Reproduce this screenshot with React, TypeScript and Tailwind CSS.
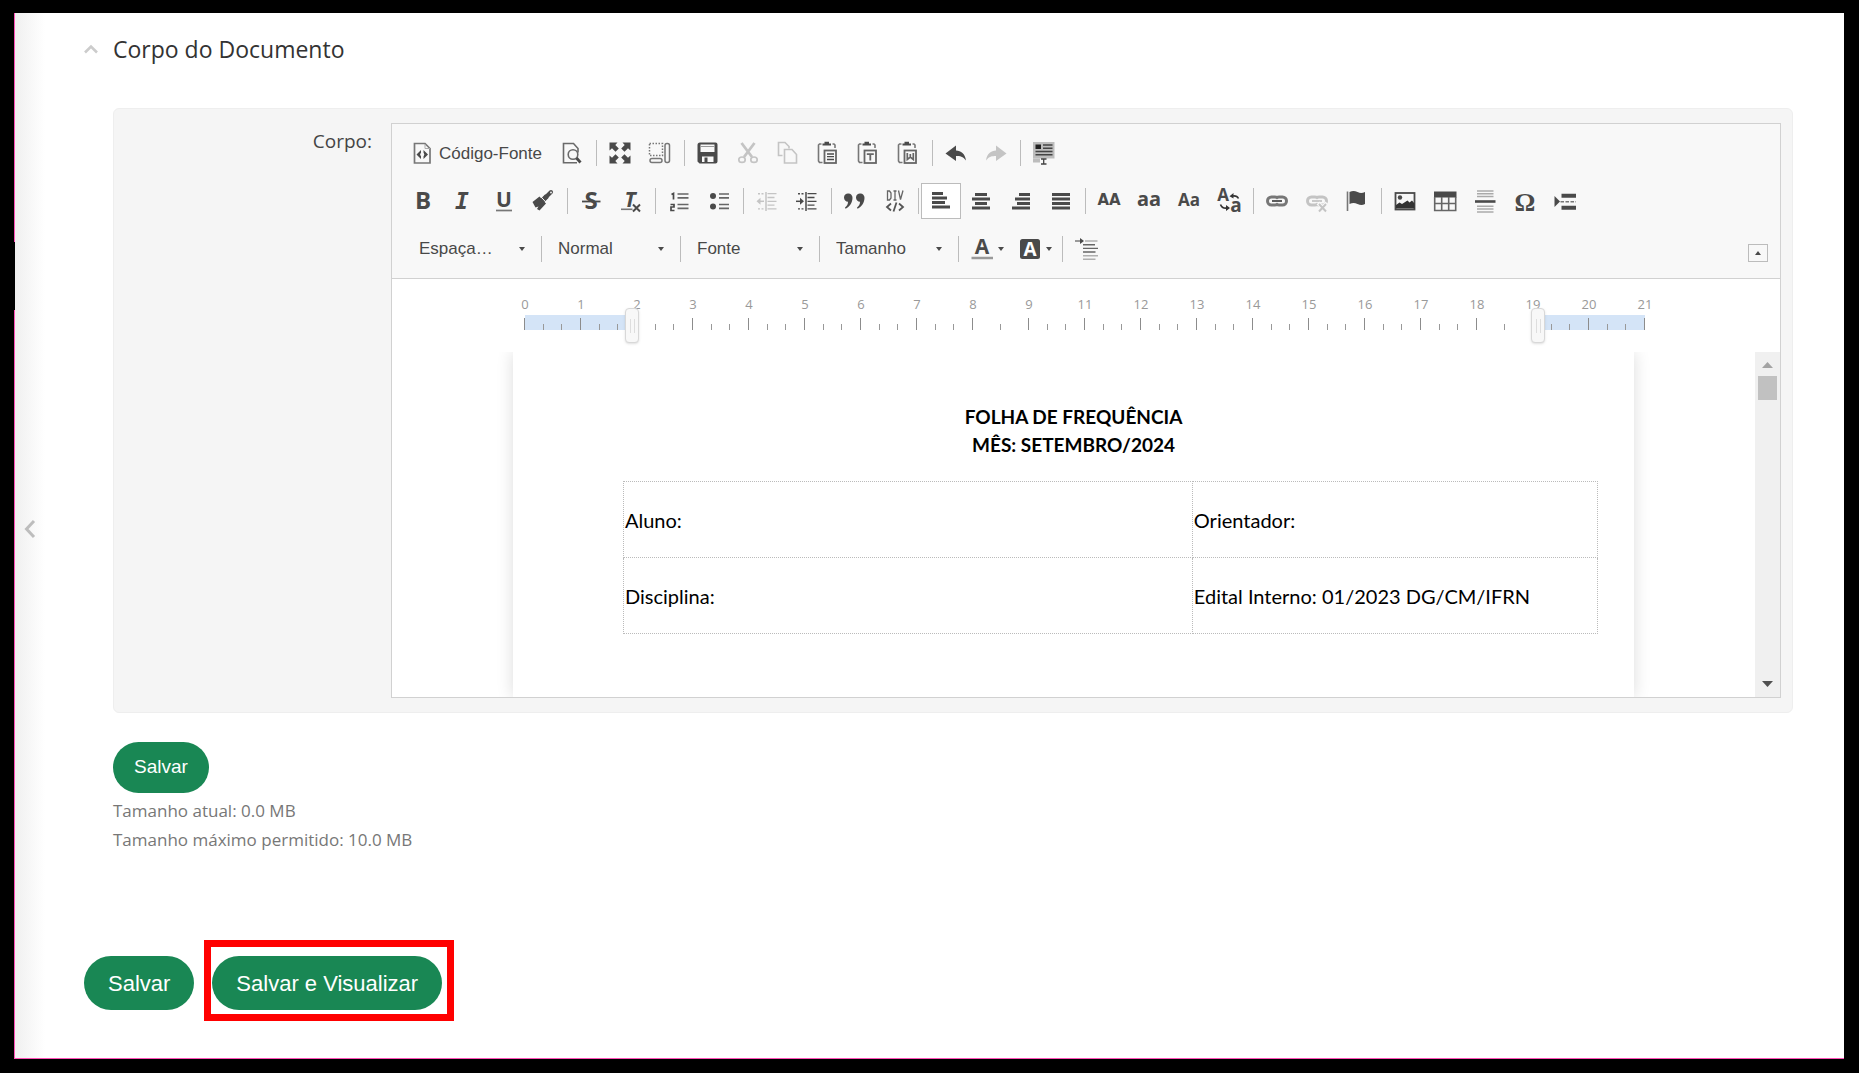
import React from "react";
import type { ReactNode } from "react";

const INK = "#4a4a4a";
const FAINT = "#c4c4c4";

function Svg({ children, color = INK }: { children: ReactNode; color?: string }) {
  return (
    <svg width="24" height="24" viewBox="0 0 24 24" fill="none" stroke="none" color={color} className="shrink-0 overflow-visible" aria-hidden="true">
      {children}
    </svg>
  );
}

function Glyph({ x, y, size, children, weight = 700, italic = false, family = "Open Sans" }: { x: number; y: number; size: number; children: string; weight?: number; italic?: boolean; family?: string }) {
  return (
    <text x={x} y={y} fontSize={size} fontWeight={weight} fontStyle={italic ? "italic" : "normal"} fontFamily={`"${family}", sans-serif`} textAnchor="middle" fill="currentColor">
      {children}
    </text>
  );
}

const SourceIcon = () => (
  <Svg>
    <path d="M3.5 2.5h10.5l5 5v14.5H3.5z" stroke="#777" strokeWidth="1.7" />
    <path d="M14 3v4.5h5" stroke="#aaa" strokeWidth="1" />
    <path d="M10 9v9L5.500 13.500zM12.500 9v9l4.500-4.500z" fill={INK} />
    <circle cx="11.200" cy="13.500" r="2" fill="#f8f8f8" />
  </Svg>
);

const PreviewIcon = () => (
  <Svg>
    <path d="M17 21.700H3.500V2.500h10l4.500 5v4" stroke="#6a6a6a" strokeWidth="1.600" />
    <circle cx="13" cy="13.500" r="4.800" stroke="#6a6a6a" strokeWidth="1.600" />
    <path d="M16.500 17l4 4.500" stroke={INK} strokeWidth="2.800" />
  </Svg>
);

const MaximizeIcon = () => (
  <Svg>
    {[0, 90, 180, 270].map((r) => (
      <path key={r} transform={`rotate(${r} 12 12)`} d="M1.500 1.500h8L7.300 4l3.500 3.500-3.300 3.300L4 7.300 1.500 9.500z" fill="currentColor" />
    ))}
  </Svg>
);

const BlocksIcon = () => (
  <Svg>
    <rect x="1.500" y="2.500" width="13" height="12" stroke="#777" strokeWidth="1.500" strokeDasharray="1.500 1.500" />
    <rect x="2" y="17.500" width="12" height="4" rx="2" stroke="#777" strokeWidth="1.500" />
    <rect x="17" y="2.500" width="4.500" height="19" rx="2" stroke="#777" strokeWidth="1.500" />
  </Svg>
);

const SaveIcon = () => (
  <Svg>
    <path d="M4 1.500h15.500a2 2 0 0 1 2 2v17a2 2 0 0 1-2 2H3.500l-2-2V4a2.500 2.500 0 0 1 2.500-2.500z" fill={INK} />
    <rect x="4.500" y="3.500" width="14" height="7.500" fill="#f8f8f8" />
    <path d="M4.500 5.500h14" stroke="#999" strokeWidth="1" />
    <rect x="6" y="15.500" width="11.500" height="5.500" fill="#f8f8f8" />
    <rect x="8.500" y="16.500" width="3" height="5" fill={INK} />
  </Svg>
);

const CutIcon = () => (
  <Svg color={FAINT}>
    <path d="M5.500 2l10.500 14M18.500 2L8 16" stroke="currentColor" strokeWidth="2.800" />
    <ellipse cx="6" cy="18.700" rx="3.200" ry="2.700" stroke="currentColor" strokeWidth="1.700" />
    <ellipse cx="18" cy="18.700" rx="3.200" ry="2.700" stroke="currentColor" strokeWidth="1.700" />
  </Svg>
);

const CopyIcon = () => (
  <Svg color={FAINT}>
    <path d="M6.500 14.500h-4V1.500h6.500l4 4v2" stroke="currentColor" strokeWidth="1.600" />
    <path d="M8.500 8.500h7.500l4.500 5v8.500h-12z" stroke="currentColor" strokeWidth="1.600" />
  </Svg>
);

function PasteIcon({ kind }: { kind: "lines" | "T" | "W" }) {
  return (
    <Svg>
      <path d="M5.500 3H3.500L2.500 4v16l1 1.500h3M16.500 3h1.500l1 1v3" stroke="#777" strokeWidth="1.600" />
      <path d="M6.500 4.500V2.500h2V.800h4.500v1.700h2v2z" fill={INK} />
      <rect x="8.500" y="9.500" width="11.500" height="12.500" stroke="#666" strokeWidth="1.800" />
      {kind === "lines" && <path d="M11 13h7M11 15.700h7M11 18.500h7" stroke={INK} strokeWidth="1.300" />}
      {kind === "T" && <path d="M10.800 13.200h7M14.300 13.200v6.300" stroke="#666" strokeWidth="1.800" />}
      {kind === "W" && <path d="M11.300 12v6.500l3-2.500 3 2.500V12M14.300 13v3" stroke="#666" strokeWidth="1.700" />}
    </Svg>
  );
}

const UndoIcon = ({ redo = false }: { redo?: boolean }) => (
  <Svg color={redo ? FAINT : INK}>
    <path transform={redo ? "translate(24 0) scale(-1 1)" : undefined} d="M1.500 12.500L12 4.500v5c5 .2 9 3 10 10-3-4-6-4.500-10-4.500v5z" fill="currentColor" />
  </Svg>
);

const SelectAllIcon = () => (
  <Svg>
    <rect x="1" y="1" width="21.500" height="16.500" fill="#bdbdbd" />
    <rect x="3.500" y="3.500" width="5.500" height="4.500" fill="#222" />
    <path d="M11 4h9.500M11 7.200h9.500M3.500 10.500h17M3.500 13.800h17" stroke="#444" strokeWidth="1.500" />
    <path d="M1 17.500h7v4H1z" fill="#bdbdbd" />
    <path d="M9 18h5.500M11.700 18v5M9 23h5.500" stroke="#444" strokeWidth="1.300" />
  </Svg>
);

const BoldIcon = () => <Svg><Glyph x={12} y={20} size={24}>B</Glyph></Svg>;
const ItalicIcon = () => <Svg><Glyph x={11} y={20} size={23} italic family="DejaVu Sans Mono">I</Glyph></Svg>;
const UnderlineIcon = () => (
  <Svg>
    <Glyph x={13} y={18} size={21}>U</Glyph>
    <path d="M5 21.500h16" stroke="#777" strokeWidth="1.700" />
  </Svg>
);
const BrushIcon = () => (
  <Svg>
    <path d="M1.500 13l7-5.500 6.500 7-6.500 7-2.500-1.500 1.500-2.500-3 1z" fill="currentColor" />
    <path d="M11.500 11.500l4.500-4.500" stroke="currentColor" strokeWidth="5" />
    <path d="M14.500 8.500l5.500-5.500" stroke="currentColor" strokeWidth="4" strokeLinecap="round" />
    <path d="M9 6.800l7 7.500" stroke="#f8f8f8" strokeWidth="1" />
    <circle cx="20" cy="3.500" r=".9" fill="#f8f8f8" />
  </Svg>
);
const StrikeIcon = () => (
  <Svg>
    <Glyph x={12} y={20} size={24}>S</Glyph>
    <path d="M3 12.500h18.500" stroke="currentColor" strokeWidth="1.800" />
  </Svg>
);
const RemoveFormatIcon = () => (
  <Svg>
    <Glyph x={11} y={18} size={21} italic>T</Glyph>
    <path d="M2 20.300h11.500" stroke="#777" strokeWidth="1.600" />
    <path d="M14 15.500l7 7M21 15.500l-7 7" stroke="currentColor" strokeWidth="2" />
  </Svg>
);
const OrderedIcon = () => (
  <Svg>
    <path d="M4.500 5.500l2-1v6M3.500 15.500h3.500v2.500h-3v3.500h3.500" stroke={INK} strokeWidth="1.700" />
    <path d="M10.500 5h11M10.500 8.800h11M10.500 15.500h11M10.500 19.300h11" stroke="#666" strokeWidth="1.700" />
  </Svg>
);
const BulletIcon = () => (
  <Svg>
    <circle cx="6" cy="7" r="3" fill="currentColor" />
    <circle cx="6" cy="17.500" r="3" fill="currentColor" />
    <path d="M12 5h10M12 8.800h10M12 15.500h10M12 19.300h10" stroke="#666" strokeWidth="1.700" />
  </Svg>
);
const IndentIcon = ({ out = false }: { out?: boolean }) => (
  <Svg color={out ? FAINT : INK}>
    <path d="M11 3v19" stroke="currentColor" strokeWidth="1.500" />
    <path d="M12.500 4.700h9M12.500 8.500h7M12.500 12.300h9M12.500 16.100h7M12.500 19.900h9" stroke="currentColor" strokeWidth="1.300" />
    <path d="M3 4.700h6M3 19.900h6" stroke="currentColor" strokeWidth="1.400" strokeDasharray="2 1.500" />
    {out ? <path d="M3 12.300h6" stroke="currentColor" strokeWidth="1.500" /> : <path d="M1 12.300h5" stroke="currentColor" strokeWidth="1.500" />}
    {out ? <path d="M1.500 12.300l4-3.500v7z" fill="currentColor" /> : <path d="M9 12.300l-4-3.500v7z" fill="currentColor" />}
  </Svg>
);
const QuoteIcon = () => (
  <Svg>
    {[0, 12].map((d) => (
      <path key={d} transform={`translate(${d} 0)`} d="M5.300 4.500a4 4 0 0 1 4.200 4.200c0 5-3 9-7 11l-.5-1.200c2-1.500 3-3.500 3-5.800C2.800 12.700 1 11 1 8.500a4 4 0 0 1 4.300-4z" fill="currentColor" />
    ))}
  </Svg>
);
const DivIcon = () => (
  <Svg>
    <path d="M4.500 2v9h2l1.500-2V4L6.500 2zM10.500 2h3M12 2v9M10.500 11h3M15.500 1.500L17.500 10.500 20 1.500" stroke="#666" strokeWidth="1.300" />
    <path d="M8 14.500l-4 3.500 4 3.500M16 14.500l4 3.500-4 3.500M13.500 13.500l-3 9" stroke="#555" strokeWidth="1.800" />
  </Svg>
);

function AlignIcon({ kind }: { kind: "left" | "center" | "right" | "justify" }) {
  const paths = {
    left: "M3 4.500h11M3 9h15M3 13.500h13M3 18h18",
    center: "M6 5.500h12M3 10h18M6 14.500h12M3 19h18",
    right: "M10 5.500h11M6 10h15M8 14.500h13M3 19h18",
    justify: "M3 5.500h18M3 10h18M3 14.500h18M3 19h18",
  };
  return <Svg><path d={paths[kind]} stroke="currentColor" strokeWidth="3" /></Svg>;
}

const UpperIcon = () => <Svg><Glyph x={12} y={16} size={15} family="DejaVu Sans">AA</Glyph></Svg>;
const LowerIcon = () => <Svg><Glyph x={12} y={17} size={20} family="Noto Sans">aa</Glyph></Svg>;
const TitleIcon = () => <Svg><Glyph x={12} y={17} size={17}>Aa</Glyph></Svg>;
const ToggleCaseIcon = () => (
  <Svg>
    <Glyph x={6} y={12} size={17}>A</Glyph>
    <Glyph x={19} y={23} size={19}>a</Glyph>
    <path d="M21.500 9.500c-1-2-3-3-6-2.500M3.500 15.500c1 3 4 4 7 3.500" stroke="#333" strokeWidth="1.600" />
    <path d="M12.500 7.200l4-3.200v5.500zM13 19l-4-3v6z" fill="#333" />
  </Svg>
);
const LinkIcon = ({ off = false }: { off?: boolean }) => (
  <Svg color={off ? FAINT : "#777"}>
    <path d="M13 14.500c-.8 1.300-1.500 1.500-3 1.500H6.500a4 4 0 0 1 0-8H10c1.500 0 2.200.2 3 1.500M11 9.500C11.800 8.200 12.500 8 14 8h3.500a4 4 0 0 1 0 8H14c-1.500 0-2.200-.2-3-1.500" stroke="currentColor" strokeWidth="3" />
    <path d="M7 12h10" stroke={off ? FAINT : INK} strokeWidth="1.800" />
    {off && <path d="M13 14l9 9M22 14l-9 9" stroke="#f8f8f8" strokeWidth="4" />}
    {off && <path d="M14 15l7 7.500M21 15l-7 7.500" stroke="currentColor" strokeWidth="2" />}
  </Svg>
);
const FlagIcon = () => (
  <Svg>
    <path d="M2.500 2.500v19.500" stroke="#777" strokeWidth="1.600" />
    <path d="M4.500 3c3-1.500 5-1.500 8 0s5 1 7.500 0v12c-2.500 1.300-4.500 1.300-7.500 0s-5-1.200-8 0z" fill="currentColor" />
  </Svg>
);
const ImageIcon = () => (
  <Svg>
    <rect x="2.500" y="4" width="19" height="16.500" stroke={INK} strokeWidth="1.800" />
    <circle cx="7" cy="8.500" r="2.200" fill={INK} />
    <path d="M3 19.500v-3.500l3.500-2.500 2.500 1.500 5.500-3.500 2 2 2.500-2 2.500 3v5z" fill="#333" />
  </Svg>
);
const TableIcon = () => (
  <Svg>
    <rect x="1" y="2.500" width="22.500" height="6" fill={INK} />
    <path d="M1.700 8v13.500h21V8M8.700 8v13.500M15.700 8v13.500M1.700 14.500h21" stroke="#666" strokeWidth="1.600" />
  </Svg>
);
const RuleIcon = () => (
  <Svg>
    <path d="M4 2h16.500M4 4.800h16.500M4 7.600h16.500M4 17.300h16.500M4 20.100h16.500M4 22.900h16.500" stroke="#aaa" strokeWidth="1.500" />
    <path d="M2 12.500h20.500" stroke={INK} strokeWidth="2.600" />
  </Svg>
);
const OmegaIcon = () => <Svg><Glyph x={12} y={21.5} size={26} family="Liberation Serif">Ω</Glyph></Svg>;
const PageBreakIcon = () => (
  <Svg>
    <path d="M1.500 7l5.500 5.500-5.500 5.500z" fill={INK} />
    <path d="M8.500 6.700h14.500M8.500 18.700h14.500" stroke={INK} strokeWidth="4" />
    <path d="M7.500 12.700h15.500" stroke="#777" strokeWidth="1.500" strokeDasharray="3.500 1.500" />
  </Svg>
);
const TextColorIcon = () => (
  <Svg>
    <Glyph x={12} y={17} size={21}>A</Glyph>
    <path d="M1.500 21h21.500" stroke="#999" strokeWidth="2.500" />
  </Svg>
);
const FillColorIcon = () => (
  <Svg>
    <rect x="2" y="2" width="20" height="20" rx="2.500" fill={INK} />
    <text x="12" y="19" fontSize="19" fontWeight="700" fontFamily='"Open Sans", sans-serif' textAnchor="middle" fill="#fff">A</text>
  </Svg>
);
const LineSpacingIcon = () => (
  <Svg>
    <path d="M1 4h6" stroke="#666" strokeWidth="1.300" />
    <path d="M6 1l4 3-4 3z" fill={INK} />
    <path d="M11 4h12.500M9 18.700h15M9 22.300h12.500" stroke="#b0b0b0" strokeWidth="1.500" />
    <path d="M9 7.700h12M9 11.400h15M9 15h12.500" stroke="#666" strokeWidth="1.400" />
  </Svg>
);
const Caret = () => (
  <svg width="6" height="4" viewBox="0 0 6 4" className="shrink-0" aria-hidden="true">
    <path d="M0 0h6L3 4z" fill={INK} />
  </svg>
);

function Tool({ label, children, disabled, active }: { label: string; children: ReactNode; disabled?: boolean; active?: boolean }) {
  return (
    <button
      type="button"
      aria-label={label}
      disabled={disabled}
      className={active ? "flex h-9 w-10 items-center justify-center border border-[#bcbcbc] bg-white" : "flex h-9 w-10 items-center justify-center"}
    >
      {children}
    </button>
  );
}

const Sep = ({ tight = false }: { tight?: boolean }) => (
  <div className={tight ? "flex w-1.5 justify-center" : "flex w-2 justify-center"}>
    <div className="h-[26px] w-px bg-[#bcbcbc]" />
  </div>
);

function Combo({ label, value }: { label: string; value: string }) {
  return (
    <div className="relative flex w-[131px] items-center">
      <select aria-label={label} className="h-9 w-full appearance-none bg-transparent pl-[13px] text-[17px] leading-6 text-[#484848] outline-none">
        <option>{value}</option>
      </select>
      <span className="pointer-events-none absolute right-3">
        <Caret />
      </span>
    </div>
  );
}

function ColorTool({ label, children }: { label: string; children: ReactNode }) {
  return (
    <button type="button" aria-label={label} className="flex h-9 w-12 items-center gap-1 pl-2">
      {children}
      <Caret />
    </button>
  );
}

function Toolbar() {
  return (
    <div className="relative border-b border-[#d1d1d1] bg-[#f8f8f8] py-[5px] pl-[11px]">
      <div className="flex h-12 items-center">
        <button type="button" className="flex h-9 w-[149px] items-center gap-1 pl-2 text-[17px] leading-6 text-[#484848]">
          <SourceIcon />
          <span className="pt-0.5">Código-Fonte</span>
        </button>
        <Tool label="Visualizar"><PreviewIcon /></Tool>
        <Sep />
        <Tool label="Maximizar"><MaximizeIcon /></Tool>
        <Tool label="Mostrar blocos de código"><BlocksIcon /></Tool>
        <Sep />
        <Tool label="Salvar documento"><SaveIcon /></Tool>
        <Tool label="Recortar" disabled><CutIcon /></Tool>
        <Tool label="Copiar" disabled><CopyIcon /></Tool>
        <Tool label="Colar"><PasteIcon kind="lines" /></Tool>
        <Tool label="Colar como texto sem formatação"><PasteIcon kind="T" /></Tool>
        <Tool label="Colar do Word"><PasteIcon kind="W" /></Tool>
        <Sep />
        <Tool label="Desfazer"><UndoIcon /></Tool>
        <Tool label="Refazer" disabled><UndoIcon redo /></Tool>
        <Sep />
        <Tool label="Selecionar tudo"><SelectAllIcon /></Tool>
      </div>
      <div className="flex h-12 items-center">
        <Tool label="Negrito"><BoldIcon /></Tool>
        <Tool label="Itálico"><ItalicIcon /></Tool>
        <Tool label="Sublinhado"><UnderlineIcon /></Tool>
        <Tool label="Copiar formatação"><BrushIcon /></Tool>
        <Sep />
        <Tool label="Tachado"><StrikeIcon /></Tool>
        <Tool label="Remover formatação"><RemoveFormatIcon /></Tool>
        <Sep />
        <Tool label="Lista numerada"><OrderedIcon /></Tool>
        <Tool label="Lista sem números"><BulletIcon /></Tool>
        <Sep />
        <Tool label="Diminuir recuo" disabled><IndentIcon out /></Tool>
        <Tool label="Aumentar recuo"><IndentIcon /></Tool>
        <Sep />
        <Tool label="Citação"><QuoteIcon /></Tool>
        <Tool label="Criar container de DIV"><DivIcon /></Tool>
        <Sep tight />
        <Tool label="Alinhar à esquerda" active><AlignIcon kind="left" /></Tool>
        <Tool label="Centralizar"><AlignIcon kind="center" /></Tool>
        <Tool label="Alinhar à direita"><AlignIcon kind="right" /></Tool>
        <Tool label="Justificado"><AlignIcon kind="justify" /></Tool>
        <Sep />
        <Tool label="Maiúsculas"><UpperIcon /></Tool>
        <Tool label="Minúsculas"><LowerIcon /></Tool>
        <Tool label="Iniciais maiúsculas"><TitleIcon /></Tool>
        <Tool label="Alternar maiúsculas"><ToggleCaseIcon /></Tool>
        <Sep />
        <Tool label="Inserir link"><LinkIcon /></Tool>
        <Tool label="Remover link" disabled><LinkIcon off /></Tool>
        <Tool label="Inserir âncora"><FlagIcon /></Tool>
        <Sep />
        <Tool label="Imagem"><ImageIcon /></Tool>
        <Tool label="Tabela"><TableIcon /></Tool>
        <Tool label="Linha horizontal"><RuleIcon /></Tool>
        <Tool label="Caractere especial"><OmegaIcon /></Tool>
        <Tool label="Quebra de página"><PageBreakIcon /></Tool>
      </div>
      <div className="flex h-12 items-center pl-[3px]">
        <Combo label="Espaçamento" value="Espaça…" />
        <Sep />
        <Combo label="Formatação" value="Normal" />
        <Sep />
        <Combo label="Nome da fonte" value="Fonte" />
        <Sep />
        <Combo label="Tamanho da fonte" value="Tamanho" />
        <Sep />
        <ColorTool label="Cor do texto"><TextColorIcon /></ColorTool>
        <ColorTool label="Cor do plano de fundo"><FillColorIcon /></ColorTool>
        <Sep />
        <Tool label="Recuo de parágrafo"><LineSpacingIcon /></Tool>
      </div>
      <button type="button" aria-label="Ocultar barra de ferramentas" className="absolute right-3 bottom-4 flex h-[18px] w-5 items-center justify-center border border-[#bcbcbc]">
        <span className="rotate-180"><Caret /></span>
      </button>
    </div>
  );
}

const RULER = [0, 1, 2, 3, 4, 5, 6, 7, 8, 9, 11, 12, 13, 14, 15, 16, 17, 18, 19, 20, 21];

function RulerHandle({ label, side }: { label: string; side: "left" | "right" }) {
  return (
    <button
      type="button"
      aria-label={label}
      className={
        (side === "left" ? "left-[100px]" : "right-[100px]") +
        " absolute top-[29px] flex h-[35px] w-[14px] items-center justify-center gap-[3px] rounded-[4px] border border-[#d8d8d8] bg-[#f8f8f8] shadow-sm"
      }
    >
      <span className="h-[14px] w-px bg-[#dedede]" />
      <span className="h-[14px] w-px bg-[#dedede]" />
    </button>
  );
}

function Ruler() {
  return (
    <div className="flex h-[73px] justify-center bg-white pr-0.5">
      <div className="relative w-[1120px] pt-[17px]">
        <div className="flex h-[19px] justify-between font-['Open_Sans'] text-[13px] leading-4 text-[#999]">
          {RULER.map((n) => (
            <span key={n} className="flex w-0 justify-center">{n}</span>
          ))}
        </div>
        <svg width="1120" height="15" viewBox="0 0 1120 15" className="overflow-visible" aria-hidden="true">
          <path d="M0 0h101v15H0zM1019 0h101v15H1019z" fill="#d4e4f7" />
          {RULER.map((n, i) => (
            <path key={n} d={`M${i * 56 - 0.5} 3v12`} stroke="#8c8c8c" strokeWidth="1" />
          ))}
          {RULER.slice(0, -1).map((n, i) => (
            <path
              key={n}
              d={n === 8 || n === 18 ? `M${i * 56 + 27.5} 9v6` : `M${i * 56 + 18.5} 9v6M${i * 56 + 36.5} 9v6`}
              stroke="#999"
              strokeWidth="1"
            />
          ))}
        </svg>
        <RulerHandle label="Margem esquerda" side="left" />
        <RulerHandle label="Margem direita" side="right" />
      </div>
    </div>
  );
}

function DocumentView() {
  return (
    <div className="flex h-[345px] overflow-hidden bg-white">
      <div className="min-w-0 flex-1">
        <div className="mx-auto h-full max-w-[1121px] bg-white px-9 pt-[51px] font-['Lato'] text-[20px] leading-7 text-black shadow-[0_0_16px_rgba(0,0,0,0.14)]">
          <p className="text-center text-[19px] font-bold">
            FOLHA DE FREQUÊNCIA
            <br />
            MÊS: SETEMBRO/2024
          </p>
          <div className="mt-[22px] pl-[74px]">
            <table className="w-full table-fixed border-collapse">
              <colgroup>
                <col className="w-[58.4%]" />
                <col />
              </colgroup>
              <tbody>
                {[
                  ["Aluno:", "Orientador:"],
                  ["Disciplina:", "Edital Interno: 01/2023 DG/CM/IFRN"],
                ].map((row) => (
                  <tr key={row[0]} className="h-19">
                    {row.map((cell) => (
                      <td key={cell} className="border border-dotted border-[#bbb] px-px">{cell}</td>
                    ))}
                  </tr>
                ))}
              </tbody>
            </table>
          </div>
        </div>
      </div>
      <div className="flex w-[25px] flex-col items-center bg-[#f0f0f0] pb-[10px]">
        <svg width="25" height="24" viewBox="0 0 25 24" aria-hidden="true"><path d="M7 16h11l-5.500-6z" fill="#a3a3a3" /></svg>
        <div className="h-6 w-[19px] bg-[#c1c1c1]" />
        <div className="flex-1" />
        <svg width="11" height="6" viewBox="0 0 11 6" aria-hidden="true"><path d="M0 0h11L5.500 6z" fill="#505050" /></svg>
      </div>
    </div>
  );
}

export default function App() {
  return (
    <div className="flex min-h-screen bg-black pt-[13px] pr-[15px] pb-[14px] pl-[14px] font-['Liberation_Sans']">
      <div className="relative flex min-w-0 flex-1 border-b border-l border-[#ff4fb8] bg-white">
        <div className="absolute top-[229px] -left-px h-[68px] w-px bg-black" />
        <button type="button" aria-label="Mostrar menu" className="flex w-[30px] shrink-0 items-center bg-gradient-to-r from-[#f0f0f0] to-white pb-[14px] pl-[9px]">
          <svg width="12" height="20" viewBox="0 0 12 20" fill="none" aria-hidden="true">
            <path d="M10 2L2.500 10l7.500 8" stroke="#bdbdbd" strokeWidth="3" />
          </svg>
        </button>
        <main className="min-w-0 flex-1 pt-[19px] pr-[51px] pb-9 pl-[39px]">
          <h2 className="font-['Open_Sans'] text-[23px] leading-[34px] text-[#333]">
            <button type="button" className="flex items-center gap-[15px]">
              <svg width="14" height="10" viewBox="0 0 14 10" fill="none" aria-hidden="true">
                <path d="M1 8.500l6-6 6 6" stroke="#ccc" strokeWidth="2.600" />
              </svg>
              Corpo do Documento
            </button>
          </h2>
          <div className="ml-[29px]">
            <section className="mt-[42px] flex rounded-md border border-[#eee] bg-[#f5f5f5] py-[14px] pr-[11px]">
              <div className="w-[277px] shrink-0 pt-1 pr-[19px] text-right font-['Open_Sans'] text-[19px] leading-7 text-[#444]">Corpo:</div>
              <div className="min-w-0 flex-1 border border-[#d1d1d1]">
                <Toolbar />
                <Ruler />
                <DocumentView />
              </div>
            </section>
            <button type="button" className="mt-[29px] block h-[51px] rounded-full bg-[#198754] px-[21px] text-[19px] text-white">Salvar</button>
            <div className="mt-[3px] font-['Open_Sans'] text-[17px] leading-[29px] text-[#777]">
              <p>Tamanho atual: 0.0 MB</p>
              <p>Tamanho máximo permitido: 10.0 MB</p>
            </div>
          </div>
          <div className="mt-[86px] flex items-end gap-2.5 text-[22px] text-white">
            <button type="button" className="mb-[11px] h-[54px] rounded-full bg-[#198754] px-6">Salvar</button>
            <div className="border-[7px] border-[#ff0000] pt-[9px] pr-[5px] pb-1 pl-px">
              <button type="button" className="block h-[54px] rounded-full bg-[#198754] px-6">Salvar e Visualizar</button>
            </div>
          </div>
        </main>
      </div>
    </div>
  );
}
